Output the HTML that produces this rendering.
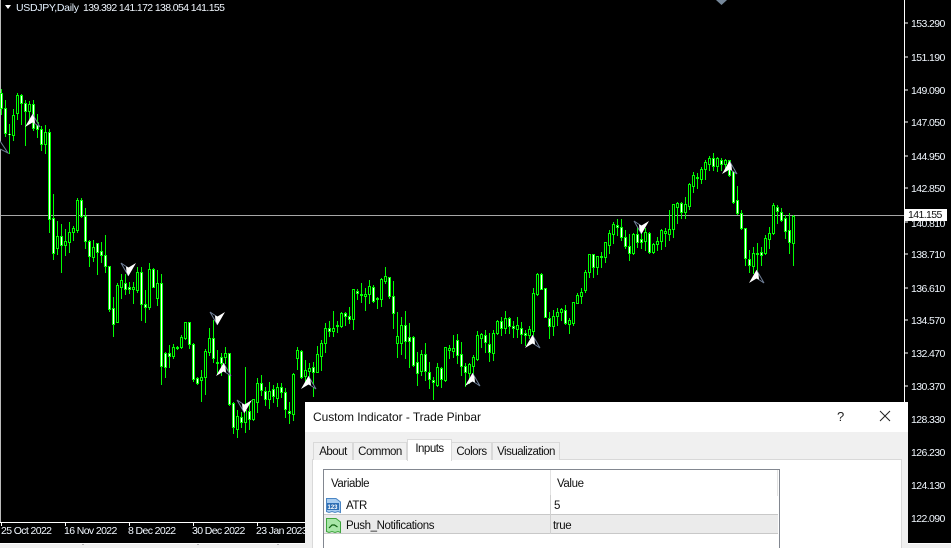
<!DOCTYPE html>
<html><head><meta charset="utf-8"><style>
html,body{margin:0;padding:0;background:#000;width:951px;height:548px;overflow:hidden}
body{position:relative;font-family:"Liberation Sans",sans-serif}
.a{position:absolute;white-space:nowrap}
.p{left:911px;font-size:10.5px;letter-spacing:-.6px;color:#f2f8ff;line-height:12px;height:12px}
.t{top:525px;font-size:10.5px;letter-spacing:-.62px;color:#f2f8ff;line-height:12px}
.d{font-size:11.5px;color:#111;line-height:14px;letter-spacing:-.4px}
.tab{position:absolute;box-sizing:border-box;border:1px solid #d9d9d9;border-bottom:none;background:#f0f0f0;text-align:center;font-size:11.5px;letter-spacing:-.5px;color:#111;line-height:18px}
</style></head><body>
<svg id="c" class="a" style="left:0;top:0" width="951" height="548" shape-rendering="crispEdges">
<rect x="0" y="215" width="904" height="1" fill="#a6a6a6"/>
<rect x="904" y="0" width="1" height="522" fill="#fff"/>
<rect x="0" y="522" width="905" height="1" fill="#fff"/>
<rect x="0" y="0" width="1" height="522" fill="#bbb"/>
<path d="M905 23h3M905 57h3M905 90h3M905 122h3M905 156h3M905 188h3M905 222h3M905 254h3M905 288h3M905 320h3M905 353h3M905 386h3M905 419h3M905 452h3M905 485h3M905 518h3" stroke="#fff" stroke-width="1"/>
<path d="M1.5 522v4M65.5 522v4M129.5 522v4M193.5 522v4M257.5 522v4" stroke="#fff" stroke-width="1"/>
<g id="g"></g>
<g id="ar" shape-rendering="auto"></g>
<polygon points="716,0 727,0 721.5,5" fill="#76889a" shape-rendering="auto"/>
<polygon points="5,5 11,5 8,9" fill="#fff" shape-rendering="auto"/>
<rect x="0" y="543" width="951" height="1" fill="#fff"/>
<rect x="0" y="544" width="951" height="4" fill="#f0f0f0"/>
<path d="M83 544v1M198 544v1M278 544v1" stroke="#777"/>
</svg>
<div class="a" style="left:16px;top:2px;font-size:10.5px;letter-spacing:-.3px;color:#e6f2ff;line-height:12px">USDJPY,Daily</div>
<div class="a" style="left:83px;top:2px;font-size:10.5px;letter-spacing:-.62px;color:#f2f8ff;line-height:12px">139.392 141.172 138.054 141.155</div>
<div class="a p" style="top:18px">153.290</div>
<div class="a p" style="top:52px">151.190</div>
<div class="a p" style="top:85px">149.090</div>
<div class="a p" style="top:117px">147.050</div>
<div class="a p" style="top:151px">144.950</div>
<div class="a p" style="top:183px">142.850</div>
<div class="a p" style="top:218px">140.810</div>
<div class="a p" style="top:249px">138.710</div>
<div class="a p" style="top:283px">136.610</div>
<div class="a p" style="top:315px">134.570</div>
<div class="a p" style="top:348px">132.470</div>
<div class="a p" style="top:381px">130.370</div>
<div class="a p" style="top:414px">128.330</div>
<div class="a p" style="top:447px">126.230</div>
<div class="a p" style="top:480px">124.130</div>
<div class="a p" style="top:513px">122.090</div>
<div class="a" style="left:905px;top:209px;width:42px;height:12px;background:#fff"></div>
<div class="a p" style="top:209px;left:908px;color:#111">141.155</div>
<div class="a t" style="left:1px">25 Oct 2022</div>
<div class="a t" style="left:64px">16 Nov 2022</div>
<div class="a t" style="left:128px">8 Dec 2022</div>
<div class="a t" style="left:192px">30 Dec 2022</div>
<div class="a t" style="left:256px">23 Jan 2023</div>

<div class="a" style="left:305px;top:402px;width:603px;height:146px;background:#f0f0f0">
 <div class="a" style="left:0;top:0;width:603px;height:30px;background:#fff"></div>
 <div class="a" style="left:8px;top:8px;font-size:12px;letter-spacing:-.07px;color:#111;line-height:14px">Custom Indicator - Trade Pinbar</div>
 <div class="a" style="left:532px;top:7px;font-size:13px;color:#222;line-height:15px">?</div>
 <svg class="a" style="left:574px;top:8px" width="12" height="12"><path d="M1 1L11 11M11 1L1 11" stroke="#222" stroke-width="1" fill="none"/></svg>
 <div class="a" style="left:7px;top:57px;width:590px;height:89px;box-sizing:border-box;border:1px solid #d9d9d9;border-bottom:none;background:#fff"></div>
 <div class="tab" style="left:8px;top:40px;width:40px;height:18px">About</div>
 <div class="tab" style="left:48px;top:40px;width:54px;height:18px">Common</div>
 <div class="tab" style="left:102px;top:37px;width:45px;height:22px;background:#fff;line-height:19px;z-index:2">Inputs</div>
 <div class="tab" style="left:146px;top:40px;width:41px;height:18px">Colors</div>
 <div class="tab" style="left:187px;top:40px;width:68px;height:18px">Visualization</div>
 <div class="a" style="left:18px;top:67px;width:457px;height:79px;box-sizing:border-box;border:1px solid #828790;border-bottom:none;background:#fff"></div>
 <div class="a" style="left:245px;top:68px;width:1px;height:26px;background:#e3e3e3"></div>
 <div class="a" style="left:472px;top:68px;width:1px;height:26px;background:#e3e3e3"></div>
 <div class="a" style="left:19px;top:112px;width:454px;height:20px;box-sizing:border-box;border-top:1px solid #c8c8c8;border-bottom:1px solid #c8c8c8;background:#ebebeb"></div>
 <div class="a" style="left:245px;top:93px;width:1px;height:39px;background:#d0d0d0"></div>
 <div class="a d" style="left:26px;top:75px">Variable</div>
 <div class="a d" style="left:252px;top:75px">Value</div>
 <div class="a d" style="left:41px;top:97px">ATR</div>
 <div class="a d" style="left:249px;top:97px">5</div>
 <div class="a d" style="left:41px;top:117px">Push_Notifications</div>
 <div class="a d" style="left:248px;top:117px">true</div>
 <svg class="a" style="left:20px;top:95px" width="18" height="37">
  <path d="M1.500 1.500H11L15.500 5V15.500L13 14.500L10 15.500L7 14.500L4 15.500L1.500 14.500Z" fill="#a9cdf0" stroke="#4b86c4"/>
  <rect x="2" y="6" width="12" height="7" fill="#2f6fb5"/>
  <text x="2.500" y="12" font-family="Liberation Sans" font-size="6" font-weight="bold" fill="#fff">123</text>
  <path d="M1.500 21.500H11L15.500 25V35.500L13 34.500L10 35.500L7 34.500L4 35.500L1.500 34.500Z" fill="#a8e6a8" stroke="#3da53d"/>
  <path d="M4 31L7 28H9.500L12.500 30" stroke="#0f5f0f" stroke-width="1.200" fill="none"/>
 </svg>
</div>
<script>
var D="89,93,108,114,1;100,108,133,136,1;124,134,134,153,1;109,115,135,140,0;93,95,113,119,0;94,95,103,124,1;100,103,111,145,1;101,104,111,122,0;100,104,128,130,1;114,122,129,137,1;126,129,144,150,1;125,132,144,153,0;129,132,219,232,1;194,218,253,259,1;221,236,248,254,0;224,236,245,272,1;229,241,245,255,0;222,232,242,252,0;226,228,232,240,0;198,200,230,232,0;198,200,216,217,1;208,216,241,248,1;240,241,256,266,1;240,247,257,261,0;243,243,252,274,1;242,251,255,262,1;235,255,266,272,1;266,266,309,311,1;297,308,324,336,1;283,285,322,322,0;274,280,287,298,0;274,283,289,294,1;282,287,289,293,1;282,287,289,303,0;267,272,290,292,0;267,272,304,320,1;290,304,307,322,1;263,269,307,309,0;268,269,287,287,1;270,283,298,305,0;274,283,366,384,1;352,353,367,377,1;345,353,356,367,1;344,347,356,358,0;346,347,348,349,0;335,337,347,348,0;322,322,338,339,0;322,322,344,348,1;343,344,379,381,1;377,378,383,384,1;370,377,380,401,0;349,351,377,394,0;328,338,352,355,0;320,338,358,362,1;350,362,363,374,0;353,357,363,375,1;347,353,357,363,0;353,353,404,405,1;402,403,427,433,1;410,416,429,437,0;412,417,422,427,1;367,410,422,432,0;402,411,419,429,1;399,399,419,420,0;378,383,402,412,0;375,383,390,395,1;387,391,399,405,1;382,391,399,408,0;385,389,396,402,1;383,387,398,406,0;383,387,392,397,1;388,392,409,417,1;402,411,413,423,1;373,374,414,420,0;347,350,358,369,0;350,351,377,378,1;360,370,376,385,0;363,368,371,383,0;362,367,372,396,1;346,354,372,372,0;340,343,356,370,0;323,328,343,352,0;321,328,331,336,1;311,328,331,336,0;321,325,326,332,0;312,313,326,327,0;312,313,316,325,1;307,316,319,323,1;289,289,319,329,0;289,291,293,299,1;283,294,295,302,0;288,294,296,310,0;280,286,294,303,0;285,287,301,302,1;297,298,299,308,0;278,279,299,306,0;267,276,281,283,0;277,277,296,298,1;281,296,313,328,1;312,336,343,357,0;317,325,343,354,0;311,325,341,358,1;323,337,341,367,1;336,337,365,366,1;352,362,373,385,1;350,354,371,375,0;343,354,371,380,1;362,372,379,388,1;377,380,382,399,1;363,367,385,386,0;367,368,379,387,1;347,347,380,381,0;345,348,350,358,0;335,348,351,357,0;334,340,355,363,1;342,354,366,375,1;363,366,372,386,1;363,364,373,383,0;355,357,366,375,0;331,335,359,360,0;333,334,338,347,0;330,335,342,352,1;333,344,352,361,1;330,333,353,360,0;320,321,333,334,0;317,321,328,335,1;311,318,328,333,0;317,318,326,333,1;321,326,328,337,1;317,325,329,337,0;322,328,334,343,1;330,333,335,345,1;326,329,335,338,0;288,293,331,340,0;273,274,294,295,0;273,274,289,289,1;288,288,317,317,1;312,318,326,338,1;310,316,326,335,0;308,312,316,325,0;308,309,312,320,0;305,310,323,324,1;318,320,324,333,0;302,302,323,325,0;293,295,303,303,0;288,292,296,303,0;270,272,290,292,0;254,254,272,277,0;254,254,267,277,1;256,256,267,274,0;252,256,257,267,0;242,242,257,262,0;230,233,245,253,0;222,224,234,243,0;219,225,227,235,1;219,227,237,240,1;230,237,246,248,1;234,246,253,260,1;233,234,253,254,0;227,234,242,247,1;227,239,242,248,1;228,232,241,250,0;232,233,252,253,1;243,244,252,253,0;237,241,244,250,0;229,230,241,249,0;228,231,233,246,0;210,229,234,240,0;204,204,229,237,0;202,203,207,223,0;202,203,212,218,1;197,204,212,218,0;183,184,206,209,0;172,175,186,192,0;173,177,178,188,0;167,169,179,183,0;160,162,169,179,0;156,158,164,170,0;153,158,166,170,1;157,158,166,171,0;158,160,164,170,1;159,160,164,168,0;160,160,175,176,1;169,169,202,203,1;186,200,213,214,1;210,213,228,229,1;228,228,258,265,1;250,259,265,272,1;247,253,266,273,0;243,253,254,270,0;247,252,255,265,1;235,238,253,254,0;227,233,239,248,0;203,205,233,234,0;205,207,211,223,1;208,212,220,221,1;215,218,231,238,1;213,230,242,253,1;215,216,243,265,0".split(";");
var h="";
var G="#00ff00";
function r(x,y,w,ht,f){return '<rect x="'+x+'" y="'+y+'" width="'+w+'" height="'+ht+'" fill="'+f+'"/>';}
D.forEach(function(s,i){var v=s.split(",").map(Number),x=1+4*i;
 h+=r(x,v[0],1,v[3]-v[0]+1,G);
 h+=r(x-1,v[1],3,v[2]-v[1]+1,G);
 if(v[2]-v[1]>1)h+=r(x,v[1]+1,1,v[2]-v[1]-1,v[4]?"#fff":"#000");
 else if(v[4])h+=r(x,v[1],1,1,"#fff");
});
document.getElementById("g").innerHTML=h;
var a="";
var S='fill="#000" stroke="#6f7f98" stroke-width="1"';
function up(x,y){a+='<polyline points="'+(x+.5)+','+y+' '+(x+8)+','+(y+13)+' '+(x+.5)+','+(y+8)+'" '+S+'/><polygon points="'+(x+.5)+','+y+' '+(x+2.5)+','+(y+4)+' '+(x+3)+','+(y+9.5)+' '+(x+.5)+','+(y+8.5)+' '+(x-7)+','+(y+13)+'" fill="#fff"/>';}
function dn(x,y){a+='<polyline points="'+(x+.5)+','+y+' '+(x-7)+','+(y-13)+' '+(x+.5)+','+(y-8)+'" '+S+'/><polygon points="'+(x+.5)+','+y+' '+(x-1.5)+','+(y-4)+' '+(x-2)+','+(y-9.5)+' '+(x+.5)+','+(y-8.5)+' '+(x+8)+','+(y-13)+'" fill="#fff"/>';}
[[32,114],[223,363],[308,376],[472,373],[532,335],[729,161],[756,270]].forEach(function(p){up(p[0],p[1])});
[[128,276],[217,325],[244,413],[641,234]].forEach(function(p){dn(p[0],p[1])});
a+='<polyline points="0,141 8,153 0,149" fill="#000" stroke="#6f7f98" stroke-width="1"/>';
document.getElementById("ar").innerHTML=a;
</script>
</body></html>
